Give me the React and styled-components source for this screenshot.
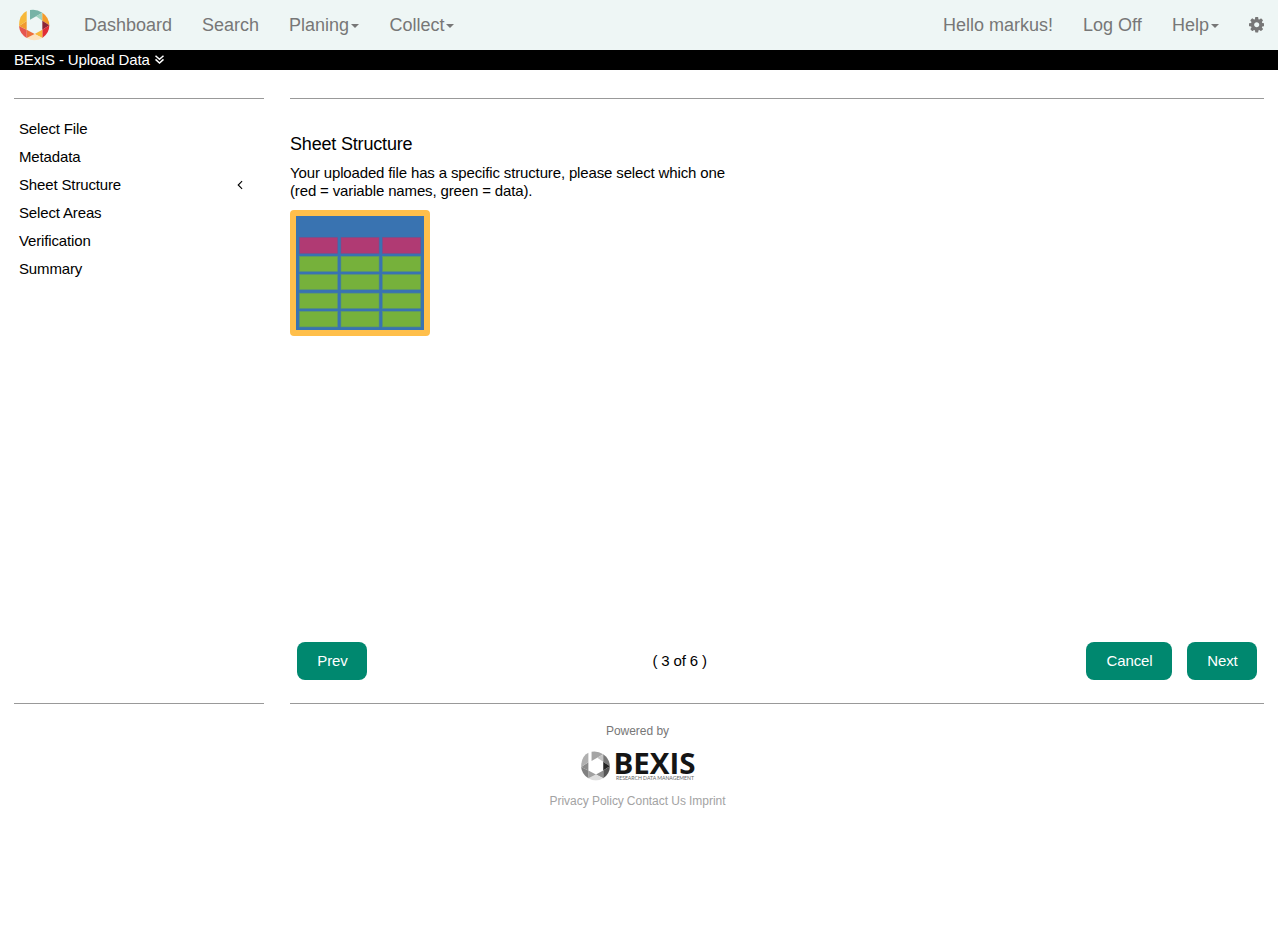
import React from 'react';
import styled, { createGlobalStyle } from 'styled-components';

const GlobalStyle = createGlobalStyle`
  * { box-sizing: border-box; }
  body {
    margin: 0;
    background: #fff;
    color: #000;
    font: 15px/18px "Liberation Sans", Arial, sans-serif;
    letter-spacing: -0.145px;
  }
`;

const Navbar = styled.nav`
  display: flex;
  align-items: center;
  height: 50px;
  padding: 0 13.6px 0 18px;
  background: #eef6f5;
  color: #777;
  font-size: 18px;
  line-height: 20px;
  letter-spacing: 0;
`;

const Brand = styled.a`
  display: flex;
  width: 32px;
  margin-right: 34px;
`;

const NavGroup = styled.div`
  display: flex;
  align-items: center;
  gap: 30px;
  margin-left: ${(p) => (p.$end ? 'auto' : '0')};
`;

const NavItem = styled.a`
  display: flex;
  align-items: center;
  width: ${(p) => p.$width}px;
  white-space: nowrap;
`;

const Caret = styled.span`
  margin: 2px 0 0 1.5px;
  border: 4px solid transparent;
  border-top-color: #777;
  border-bottom: 0;
`;

const TitleBar = styled.header`
  display: flex;
  align-items: center;
  gap: 5px;
  height: 20px;
  padding-left: 14px;
  background: #000;
  color: #fff;

  svg { margin-bottom: 2px; }
`;

const Page = styled.main`
  display: grid;
  grid-template-columns: 250px 974px;
  column-gap: 26px;
  height: 606px;
  margin: 28px 14px 0;
`;

const Panel = styled.section`
  display: flex;
  flex-direction: column;
  border-top: 1px solid #999;
  border-bottom: 1px solid #999;
`;

const StepList = styled.ul`
  margin: 16px 0 0;
  padding: 0;
  list-style: none;
`;

const Step = styled.li`
  display: flex;
  align-items: center;
  justify-content: space-between;
  height: 28px;
  padding: 0 20px 0 5px;
`;

const Heading = styled.h2`
  margin: 34px 0 0;
  font-size: 18px;
  font-weight: 400;
  line-height: 22px;
  letter-spacing: -0.18px;
`;

const Hint = styled.p`
  margin: 9px 0 10px;
`;

const StructureOption = styled.button`
  display: block;
  width: 140px;
  height: 126px;
  padding: 0;
  border: 6px solid #ffbf4b;
  border-radius: 4px;
  background: #3973b1;
  svg { display: block; }
`;

const WizardBar = styled.div`
  display: grid;
  grid-template-columns: 355.5px auto 1fr;
  align-items: center;
  margin: auto 7px 23px;
`;

const ButtonGroup = styled.div`
  display: flex;
  gap: 15px;
  justify-content: ${(p) => (p.$end ? 'flex-end' : 'flex-start')};
`;

const Button = styled.button`
  width: ${(p) => p.$width}px;
  height: 38px;
  padding: 0 0 0 1px;
  border: 0;
  border-radius: 8px;
  background: #00886f;
  color: #fff;
  font: inherit;
  letter-spacing: inherit;
`;

const Footer = styled.footer`
  display: flex;
  flex-direction: column;
  align-items: center;
  width: 1275px;
  padding-top: 18px;
  color: #777;
  font-size: 12px;
  letter-spacing: -0.02px;
`;

const FooterLogo = styled.svg`
  display: block;
  margin: 10px 0;
  overflow: visible;
`;

const FooterLinks = styled.div`
  display: flex;
  gap: 3px;
  color: #a3a3a3;
`;

const logoColors = ['#76b3a6', '#9fd3bf', '#f49b2a', '#8c2638', '#e02d35', '#f8b839', '#fde3be', '#ee703c', '#e5554f', '#f19a2e', '#f7b83a'];
const logoGreys = ['#a5a5a5', '#c5c5c5', '#777', '#252525', '#555', '#909090', '#dedede', '#a0a0a0', '#808080', '#8b8b8b', '#b0b0b0'];
const facets = [
  'M60 17Q79 13 97 25L60 46Z',
  'M78 36L97 25V49Z',
  'M97 25Q117 38 118 63L97 49Z',
  'M97 49L118 63L97 76Z',
  'M118 63Q118 87 97 101V76Z',
  'M97 76V101L74 89Z',
  'M50 101L74 89L97 101Q73 115 50 101Z',
  'M50 76L74 89L50 101Z',
  'M27 65L50 76V101Q29 88 27 65Z',
  'M27 65L50 50V76Z',
  'M27 65Q27 31 50 20V50Z',
];

const Facets = ({ colors }) => facets.map((d, i) => <path key={d} d={d} fill={colors[i]} />);

const columns = [[3.2, 38.6], [44.7, 38.6], [86.3, 38.6]];
const rows = [[21.2, 16.4, '#b03a73', '#824a87'], [40, 15.7, '#76b13b', '#5f9868'], [58.2, 15.7, '#76b13b', '#5f9868'], [76.9, 15.7, '#76b13b', '#5f9868'], [95, 16.2, '#76b13b', '#5f9868']];

const SheetPreview = () => (
  <svg width="128" height="114" viewBox="0 0 128 114">
    {rows.map(([y, h, fill, edge]) =>
      columns.map(([x, w]) => (
        <rect key={`${x}-${y}`} x={x + 0.3} y={y + 0.3} width={w - 0.6} height={h - 0.6} fill={fill} stroke={edge} strokeWidth="0.6" />
      ))
    )}
  </svg>
);

const Gear = () => (
  <svg width="15.43" height="15.43" viewBox="0 128 1536 1536" fill="currentColor">
    <path d="M1024 896q0-106-75-181t-181-75-181 75-75 181 75 181 181 75 181-75 75-181zm512-109v222q0 12-8 23t-20 13l-185 28q-19 54-39 91 35 50 107 138 10 12 10 25t-9 23q-27 37-99 108t-94 71q-12 0-26-9l-138-108q-44 23-91 38-16 136-29 186-7 28-36 28h-222q-14 0-24.5-8.5t-11.5-21.5l-28-184q-49-16-90-37l-141 107q-10 9-25 9-14 0-25-11-126-114-165-168-7-10-7-23 0-12 8-23 15-21 51-66.5t54-70.5q-27-50-41-99l-183-27q-13-2-21-12.5t-8-23.5v-222q0-12 8-23t19-13l186-28q14-46 39-92-40-57-107-138-10-12-10-24 0-10 9-23 26-36 98.5-107.5t94.5-71.5q13 0 26 10l138 107q44-23 91-38 16-136 29-186 7-28 36-28h222q14 0 24.5 8.5t11.5 21.5l28 184q49 16 90 37l142-107q9-9 24-9 13 0 25 10 129 119 165 170 7 8 7 22 0 12-8 23-15 21-51 66.5t-54 70.5q26 50 41 98l183 28q13 2 21 12.5t8 23.5z" />
  </svg>
);

const DoubleDown = () => (
  <svg width="9" height="9" viewBox="0 0 9 9" fill="none" stroke="currentColor" strokeWidth="1.5">
    <path d="M.5.7L4.5 4.3L8.5.7M.5 4.4L4.5 8L8.5 4.4" />
  </svg>
);

const AngleLeft = () => (
  <svg width="8" height="10" viewBox="0 0 8 10" fill="none" stroke="currentColor" strokeWidth="1.1">
    <path d="M6.1 1.2L2.2 5L6.1 8.8" />
  </svg>
);

const steps = ['Select File', 'Metadata', 'Sheet Structure', 'Select Areas', 'Verification', 'Summary'];

export default function App() {
  return (
    <>
      <GlobalStyle />
      <Navbar>
        <Brand>
          <svg width="32" height="32" viewBox="24 14 96 96"><Facets colors={logoColors} /></svg>
        </Brand>
        <NavGroup>
          <NavItem $width={88}>Dashboard</NavItem>
          <NavItem $width={57}>Search</NavItem>
          <NavItem $width={70.5}>Planing<Caret /></NavItem>
          <NavItem $width={65}>Collect<Caret /></NavItem>
        </NavGroup>
        <NavGroup $end>
          <NavItem $width={110}>Hello markus!</NavItem>
          <NavItem $width={59}>Log Off</NavItem>
          <NavItem $width={47}>Help<Caret /></NavItem>
          <NavItem $width={15.4}><Gear /></NavItem>
        </NavGroup>
      </Navbar>
      <TitleBar>BExIS - Upload Data <DoubleDown /></TitleBar>
      <Page>
        <Panel>
          <StepList>
            {steps.map((step) => (
              <Step key={step}>{step}{step === 'Sheet Structure' && <AngleLeft />}</Step>
            ))}
          </StepList>
        </Panel>
        <Panel>
          <Heading>Sheet Structure</Heading>
          <Hint>Your uploaded file has a specific structure, please select which one<br />(red = variable names, green = data).</Hint>
          <StructureOption aria-label="Header row above data rows"><SheetPreview /></StructureOption>
          <WizardBar>
            <ButtonGroup><Button $width={70}>Prev</Button></ButtonGroup>
            <span>( 3 of 6 )</span>
            <ButtonGroup $end>
              <Button $width={86}>Cancel</Button>
              <Button $width={70}>Next</Button>
            </ButtonGroup>
          </WizardBar>
        </Panel>
      </Page>
      <Footer>
        <span>Powered by</span>
        <FooterLogo width="116" height="32" viewBox="0 0 116 32">
          <svg x="0.5" y="0.8" width="30" height="30" viewBox="25 14 95 95"><Facets colors={logoGreys} /></svg>
          <text x="33.5" y="24" fontFamily="Open Sans, sans-serif" fontSize="28" fontWeight="700" fill="#151515" textLength="82" lengthAdjust="spacingAndGlyphs">BEXIS</text>
          <text x="36" y="30.2" fontFamily="Lato, sans-serif" fontSize="5.2" fill="#666" textLength="78" lengthAdjust="spacingAndGlyphs">RESEARCH DATA MANAGEMENT</text>
        </FooterLogo>
        <FooterLinks><span>Privacy Policy</span><span>Contact Us</span><span>Imprint</span></FooterLinks>
      </Footer>
    </>
  );
}
